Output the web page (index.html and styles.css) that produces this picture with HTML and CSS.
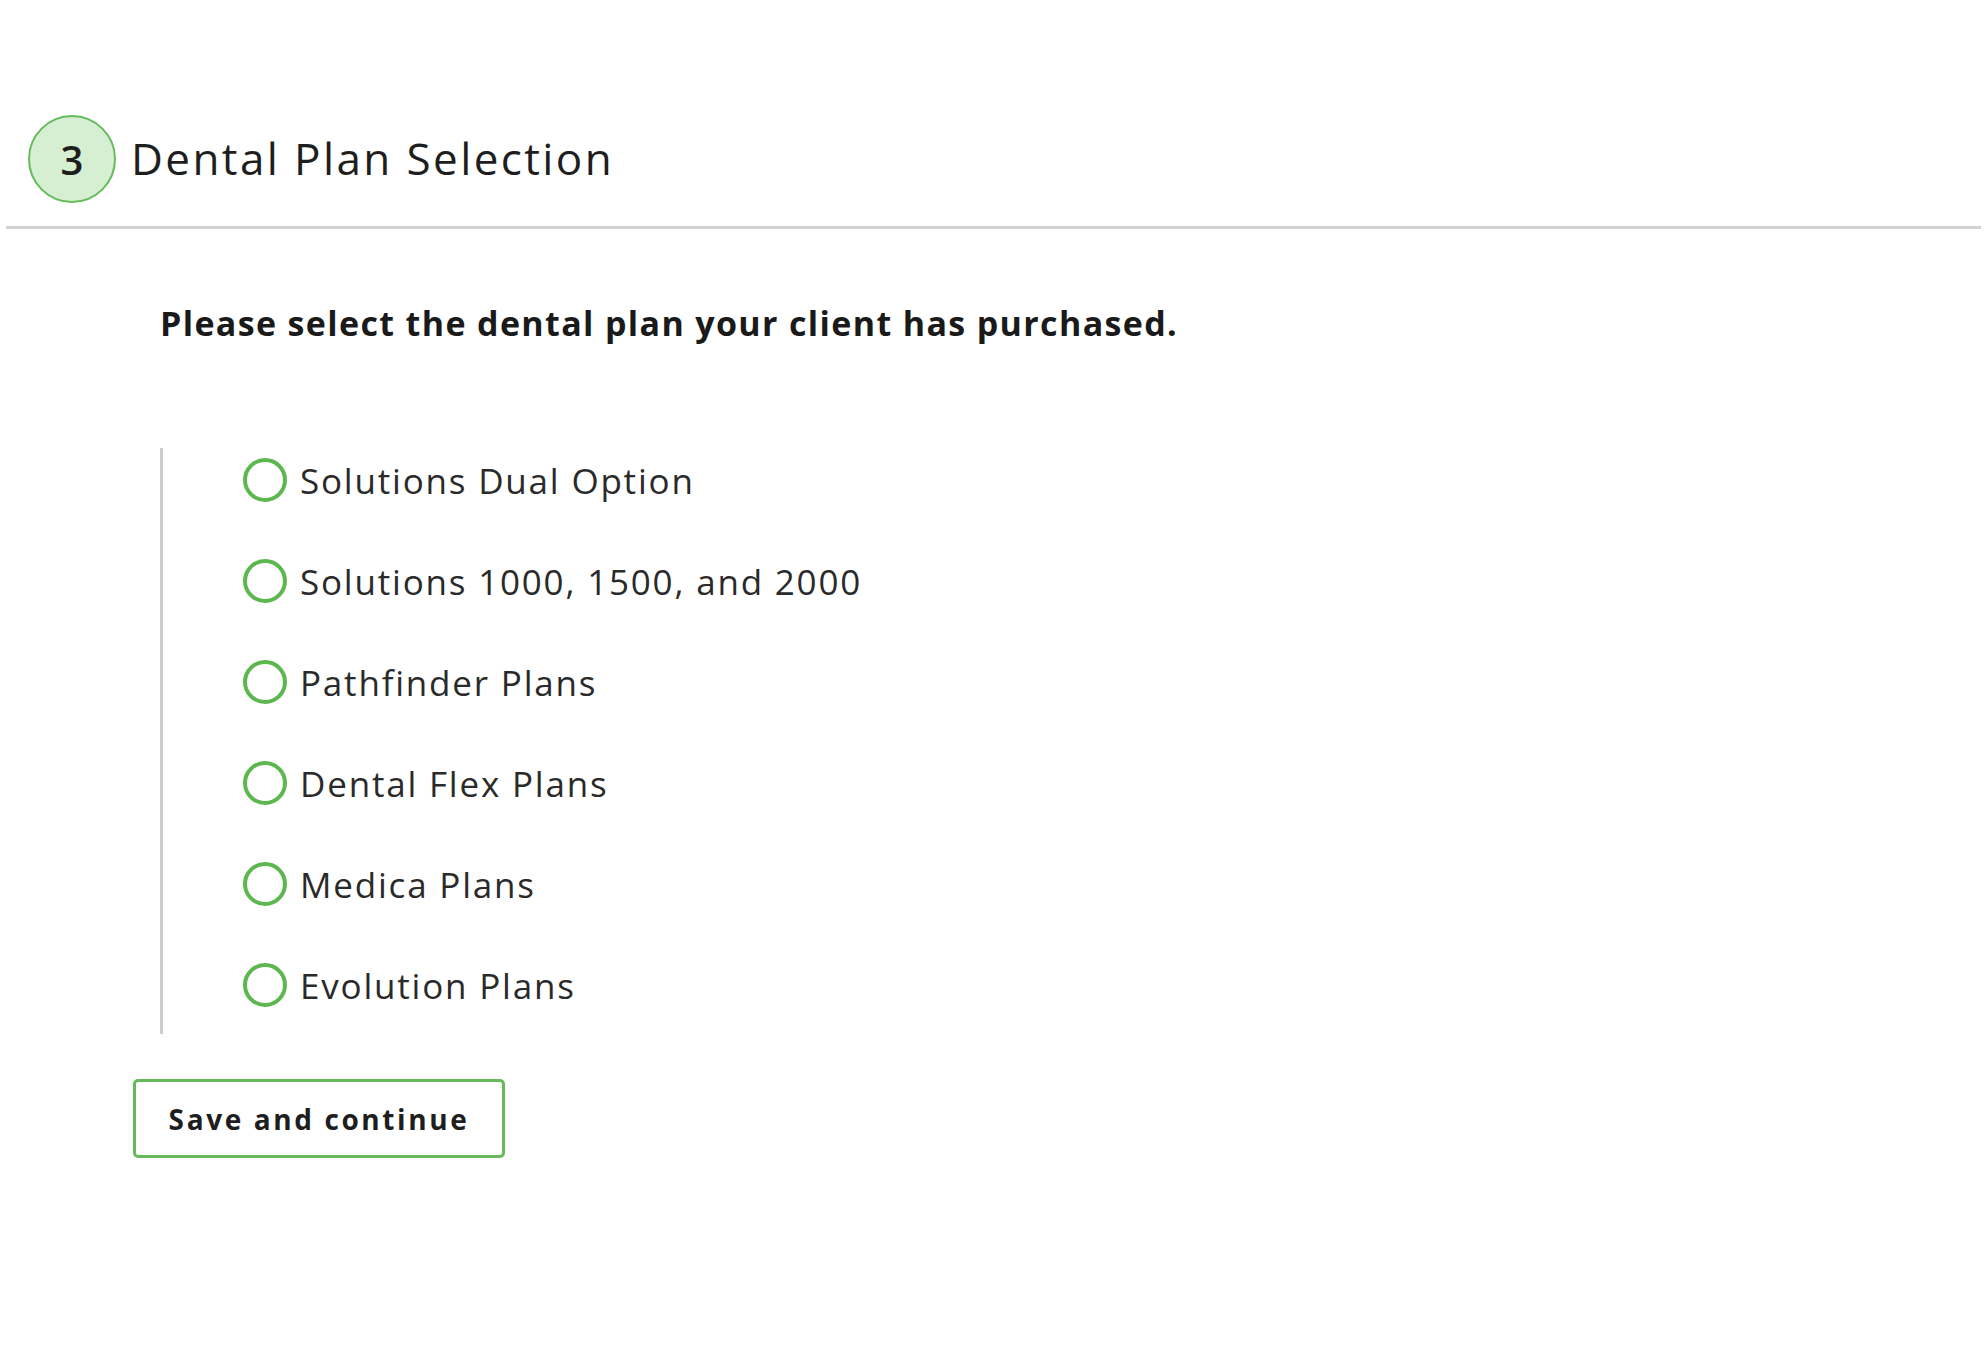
FILE: index.html
```html
<!DOCTYPE html>
<html lang="en">
<head>
<meta charset="utf-8">
<title>Dental Plan Selection</title>
<link rel="stylesheet" href="styles.css">
</head>
<body>
<div class="page">
  <header class="step-header">
    <div class="step-num">3</div>
    <h1 class="step-title">Dental Plan Selection</h1>
  </header>
  <section class="step-body">
    <p class="question">Please select the dental plan your client has purchased.</p>
    <div class="options">
      <label class="option"><span class="radio"></span><span class="opt-label">Solutions Dual Option</span></label>
      <label class="option"><span class="radio"></span><span class="opt-label">Solutions 1000, 1500, and 2000</span></label>
      <label class="option"><span class="radio"></span><span class="opt-label">Pathfinder Plans</span></label>
      <label class="option"><span class="radio"></span><span class="opt-label">Dental Flex Plans</span></label>
      <label class="option"><span class="radio"></span><span class="opt-label">Medica Plans</span></label>
      <label class="option"><span class="radio"></span><span class="opt-label">Evolution Plans</span></label>
    </div>
    <button class="btn-save" type="button">Save and continue</button>
  </section>
</div>
</body>
</html>
```
FILE: styles.css
```css
html, body {
  margin: 0;
  padding: 0;
  background: #ffffff;
}
body {
  font-family: "Open Sans", "Noto Sans", sans-serif;
  color: #222222;
}
.page {
  padding: 0 7px 0 6px;
}
.step-header {
  display: flex;
  align-items: center;
  gap: 15px;
  padding: 115px 0 23px 22px;
  border-bottom: 3px solid #d2d2d2;
}
.step-num {
  width: 84px;
  height: 84px;
  border: 2px solid #66bb5c;
  border-radius: 50%;
  background: #d6eed2;
  display: flex;
  align-items: center;
  justify-content: center;
  font-size: 40px;
  font-weight: 600;
  color: #1e1e1e;
}
.step-title {
  margin: 0 0 3px;
  font-size: 44px;
  font-weight: 400;
  color: #1e1e1e;
  letter-spacing: 2.4px;
}
.step-body {
  padding-left: 154px;
}
.question {
  margin: 72px 0 103px;
  font-size: 34px;
  line-height: 44px;
  font-weight: 700;
  color: #1a1a1a;
  letter-spacing: 1.35px;
}
.options {
  display: flex;
  flex-direction: column;
  gap: 37px;
  border-left: 3px solid #cccccc;
  padding: 0 0 17px 80px;
}
.option {
  display: flex;
  align-items: center;
  gap: 13px;
  height: 64px;
}
.radio {
  width: 36px;
  height: 36px;
  border: 4px solid #5cb74f;
  border-radius: 50%;
  flex: none;
}
.opt-label {
  font-size: 35px;
  color: #2a2a2a;
  letter-spacing: 1.8px;
}
.btn-save {
  display: block;
  margin: 45px 0 0 -27px;
  width: 372px;
  height: 79px;
  border: 3px solid #64bb58;
  border-radius: 5px;
  background: #ffffff;
  font-family: "Open Sans", "Noto Sans", sans-serif;
  font-size: 28px;
  font-weight: 700;
  letter-spacing: 2.6px;
  color: #1e1e1e;
  padding: 0;
}
```
